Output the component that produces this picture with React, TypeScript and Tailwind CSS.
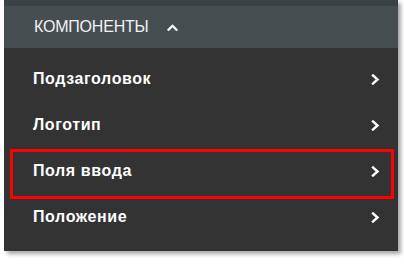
import React from 'react';

const items = ['Подзаголовок', 'Логотип', 'Поля ввода', 'Положение'];

const ChevronRight: React.FC = () => (
  <svg width="9" height="11" viewBox="0 0 9 11" fill="none">
    <path d="M2 1.5 L6.5 5.5 L2 9.5" stroke="#ffffff" strokeWidth="2.4" strokeLinecap="square" />
  </svg>
);

const ChevronUp: React.FC = () => (
  <svg width="11" height="7" viewBox="0 0 11 7" fill="none">
    <path d="M1.5 5.8 L5.5 1.8 L9.5 5.8" stroke="#ffffff" strokeWidth="2.2" strokeLinecap="square" />
  </svg>
);

export default function App() {
  return (
    <div className="w-[404px] h-[264px] bg-white" style={{ fontFamily: '"Liberation Sans", Arial, sans-serif' }}>
      <div className="relative ml-[4px] w-[394px] h-[251px] bg-[#333333] flex flex-col shadow-[3px_3px_4px_rgba(0,0,0,0.35)]">
        <div className="h-[6px] bg-[#3b4144]" />
        <div className="h-[42px] bg-[#464e52] flex items-center pl-[30px] gap-[18px]">
          <span className="text-[16px] text-[#f2f2f2] tracking-[-0.2px]">КОМПОНЕНТЫ</span>
          <ChevronUp />
        </div>
        <div className="flex flex-col pt-[8px]">
          {items.map((item) => (
            <div key={item} className="h-[46px] flex items-center justify-between pl-[29px] pr-[18px]">
              <span className="text-[16px] font-bold text-white tracking-[0.6px]">{item}</span>
              <ChevronRight />
            </div>
          ))}
        </div>
        <div className="absolute left-[6px] top-[149px] w-[384px] h-[50px] border-[3px] border-[#ff0000]" />
      </div>
    </div>
  );
}
